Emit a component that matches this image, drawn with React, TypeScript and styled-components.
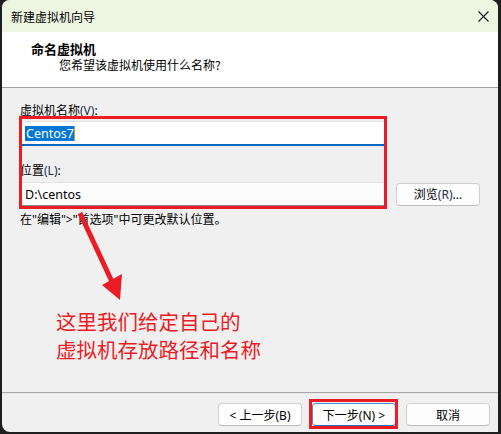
import React from 'react';
import styled, { createGlobalStyle } from 'styled-components';

const GlobalStyle = createGlobalStyle`
    html, body {
        margin: 0;
        padding: 0;
        background: #1e1e1e;
        font-family: "Noto Sans", "Noto Sans CJK SC", sans-serif;
    }
`;

const UI_FONT = `"Noto Sans", "Noto Sans CJK SC", sans-serif`;
const ANNOTATION_RED = '#ea1c26';

const Window = styled.div`
    position: relative;
    margin-left: 2px;
    width: 496px;
    height: 432px;
    display: flex;
    flex-direction: column;
    background: #f0f0f0;
    border-radius: 8px 8px 0 8px;
    overflow: hidden;
    font-family: ${UI_FONT};
    font-size: 12px;
    color: #000;
`;

const TitleBar = styled.div`
    height: 32px;
    flex: none;
    display: flex;
    align-items: center;
    justify-content: space-between;
    padding: 0 0 0 9px;
    background: #edf6e1;
    font-family: "Noto Sans CJK SC", sans-serif;
    font-size: 12px;
`;

const CloseButton = styled.span`
    width: 30px;
    display: flex;
    justify-content: center;
    align-items: center;
`;

const Header = styled.div`
    height: 56px;
    flex: none;
    background: #fff;
    border-bottom: 1px solid #a0a0a0;
    display: flex;
    flex-direction: column;
    padding: 9px 0 0 29px;
    box-sizing: border-box;
    font-family: "Noto Sans CJK SC", sans-serif;
`;

const HeaderTitle = styled.div`
    font-size: 13px;
    font-weight: 700;
    line-height: 16px;
`;

const HeaderSubtitle = styled.div`
    font-size: 12px;
    line-height: 16px;
    margin: 0 0 0 28px;
`;

const Body = styled.div`
    flex: 1;
    padding: 15px 16px 0 16px;
    display: flex;
    flex-direction: column;
    border-bottom: 1px solid #a8a8a8;
`;

const Label = styled.div<{ gapTop?: number }>`
    font-size: 12px;
    line-height: 16px;
    margin-top: ${({ gapTop }) => gapTop ?? 0}px;
    margin-left: 2px;
`;

const Mnemonic = styled.span`
    color: #22304c;
`;

const Fields = styled.div`
    position: relative;
    display: flex;
    flex-direction: column;
`;

const TextBox = styled.div<{ focused?: boolean }>`
    width: 367px;
    height: ${({ focused }) => (focused ? 25 : 24)}px;
    box-sizing: border-box;
    margin-left: 2px;
    margin-top: ${({ focused }) => (focused ? 2 : 0)}px;
    background: ${({ focused }) => (focused ? '#fff' : '#fbfbfb')};
    border: 1px solid ${({ focused }) => (focused ? '#e4e4e4' : '#e2e2e2')};
    border-bottom: ${({ focused }) => (focused ? '2px solid #0067c0' : '1px solid #8a8a8a')};
    border-radius: 3px 3px 0 0;
    display: flex;
    align-items: center;
    padding-left: 4px;
    font-size: 12.5px;
`;

const Selection = styled.span`
    background: #0078d7;
    color: #fff;
    line-height: 15px;
    padding: 0 0 0 1px;
    border-right: 1px solid #f08a24;
`;

const FieldRow = styled.div`
    display: flex;
    align-items: center;
    margin-top: 3px;
    gap: 9px;
`;

const Button = styled.button<{ primary?: boolean }>`
    width: 84px;
    height: 23px;
    box-sizing: border-box;
    background: #fdfdfd;
    border: 1px solid ${({ primary }) => (primary ? '#4a8fd4' : '#d0d0d0')};
    border-bottom-color: ${({ primary }) => (primary ? '#1a6fc2' : '#bcbcbc')};
    border-radius: 4px;
    font-family: ${UI_FONT};
    font-size: 12px;
    color: #000;
    padding: 0;
    display: flex;
    align-items: center;
    justify-content: center;
`;

const Hint = styled.div`
    margin-top: 6px;
    margin-left: 2px;
    line-height: 16px;
`;

const HighlightBox = styled.div`
    position: absolute;
    left: 1px;
    top: -3px;
    width: 368px;
    height: 93px;
    border: 3px solid ${ANNOTATION_RED};
    box-sizing: border-box;
    pointer-events: none;
`;

const Note = styled.div`
    margin: 79px 0 0 38px;
    font-family: "Noto Sans CJK SC", sans-serif;
    font-size: 20.5px;
    line-height: 28px;
    color: ${ANNOTATION_RED};
`;

const Arrow = styled.svg`
    position: absolute;
    left: 0;
    top: 0;
    pointer-events: none;
`;

const Footer = styled.div`
    height: 39px;
    flex: none;
    display: flex;
    justify-content: flex-end;
    align-items: flex-start;
    padding: 9px 8px 0 0;
    gap: 10px;
    box-sizing: border-box;
    border-top: 1px solid #e8e8e8;
`;

const Marked = styled.div`
    position: relative;
    display: flex;
    &::after {
        content: '';
        position: absolute;
        left: -3px;
        top: -4px;
        right: -2px;
        bottom: -3px;
        border: 3px solid ${ANNOTATION_RED};
    }
`;

function App() {
    return (
        <>
            <GlobalStyle />
            <Window>
                <TitleBar>
                    <span>新建虚拟机向导</span>
                    <CloseButton>
                        <svg width="11" height="11" viewBox="0 0 11 11">
                            <path d="M0.5 0.5 L10.5 10.5 M10.5 0.5 L0.5 10.5" stroke="#1a1a1a" strokeWidth="1.1" />
                        </svg>
                    </CloseButton>
                </TitleBar>
                <Header>
                    <HeaderTitle>命名虚拟机</HeaderTitle>
                    <HeaderSubtitle>您希望该虚拟机使用什么名称?</HeaderSubtitle>
                </Header>
                <Body>
                    <Label>
                        虚拟机名称<Mnemonic>(V)</Mnemonic>:
                    </Label>
                    <Fields>
                        <TextBox focused>
                            <Selection>Centos7</Selection>
                        </TextBox>
                        <Label gapTop={17}>
                            位置<Mnemonic>(L)</Mnemonic>:
                        </Label>
                        <FieldRow>
                            <TextBox>D:\centos</TextBox>
                            <Button>
                                浏览<Mnemonic>(R)</Mnemonic>...
                            </Button>
                        </FieldRow>
                        <HighlightBox />
                    </Fields>
                    <Hint>在"编辑"&gt;"首选项"中可更改默认位置。</Hint>
                    <Note>
                        这里我们给定自己的
                        <br />
                        虚拟机存放路径和名称
                    </Note>
                </Body>
                <Footer>
                    <Button>&lt; 上一步(B)</Button>
                    <Marked>
                        <Button primary>下一步(N) &gt;</Button>
                    </Marked>
                    <Button>取消</Button>
                </Footer>
                <Arrow width="496" height="432" viewBox="0 0 496 432">
                    <line x1="78" y1="213" x2="112" y2="286" stroke={ANNOTATION_RED} strokeWidth="5" />
                    <polygon points="118,300 100,285 120,274" fill={ANNOTATION_RED} />
                </Arrow>
            </Window>
        </>
    );
}

export default App;
